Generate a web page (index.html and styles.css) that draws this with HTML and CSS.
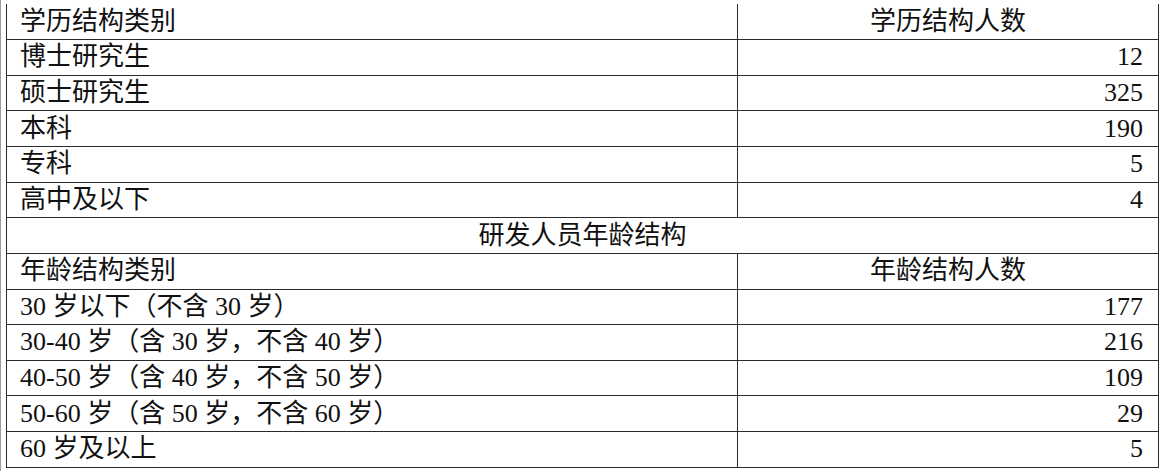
FILE: index.html
```html
<!DOCTYPE html>
<html lang="zh">
<head>
<meta charset="utf-8">
<link rel="stylesheet" href="styles.css">
</head>
<body>
<div class="page">
<table class="stats">
  <colgroup><col class="c1"><col class="c2"></colgroup>
  <tr><td>学历结构类别</td><td class="center">学历结构人数</td></tr>
  <tr><td>博士研究生</td><td class="num">12</td></tr>
  <tr><td>硕士研究生</td><td class="num">325</td></tr>
  <tr><td>本科</td><td class="num">190</td></tr>
  <tr><td>专科</td><td class="num">5</td></tr>
  <tr><td>高中及以下</td><td class="num">4</td></tr>
  <tr><td colspan="2" class="center">研发人员年龄结构</td></tr>
  <tr><td>年龄结构类别</td><td class="center">年龄结构人数</td></tr>
  <tr><td>30 岁以下（不含 30 岁）</td><td class="num">177</td></tr>
  <tr><td>30-40 岁（含 30 岁，不含 40 岁）</td><td class="num">216</td></tr>
  <tr><td>40-50 岁（含 40 岁，不含 50 岁）</td><td class="num">109</td></tr>
  <tr><td>50-60 岁（含 50 岁，不含 60 岁）</td><td class="num">29</td></tr>
  <tr><td>60 岁及以上</td><td class="num">5</td></tr>
</table>
</div>
</body>
</html>
```
FILE: styles.css
```css
html, body {
  margin: 0;
  padding: 0;
  background: #fff;
}
.page {
  width: 1161px;
  height: 471px;
  box-sizing: border-box;
  border-left: 1px solid #9a9a9a;
  padding: 4px 0 0 5px;
  overflow: hidden;
}
.stats {
  border-collapse: collapse;
  width: 1152px;
  table-layout: fixed;
  font-family: "Liberation Serif", "Noto Sans CJK SC", serif;
  font-size: 26px;
  color: #111;
}
.c1 { width: 731px; }
.c2 { width: 421px; }
.stats tr {
  height: 35.64px;
}
.stats td {
  border: 1.5px solid #2a2a2a;
  padding: 0 15px 0 13px;
  line-height: 1;
  vertical-align: middle;
  white-space: nowrap;
}
.stats tr:first-child td {
  border-top: none;
}
.stats td.center { text-align: center; padding: 0; }
.stats td.num { text-align: right; }
```
